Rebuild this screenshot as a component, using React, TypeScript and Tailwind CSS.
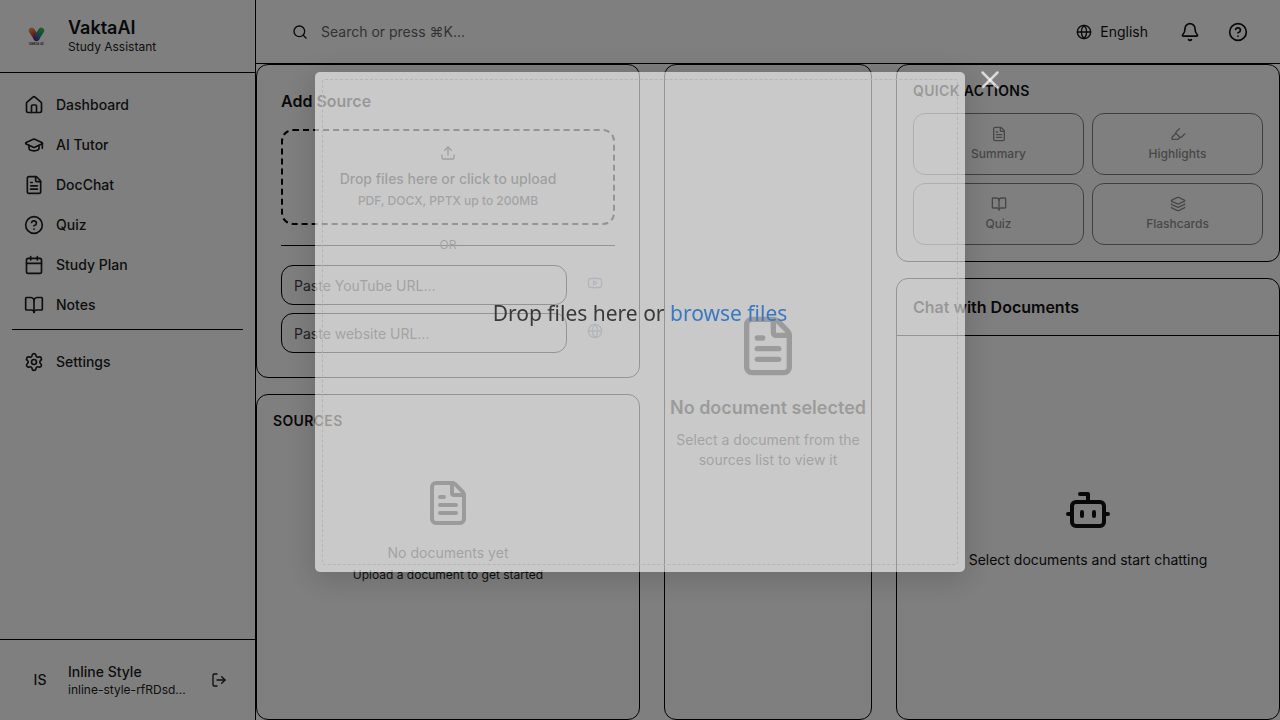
import {
  BookOpen,
  Bell,
  Bot,
  Calendar,
  CircleHelp,
  FileText,
  Globe,
  GraduationCap,
  Highlighter,
  House,
  Layers,
  LogOut,
  Search,
  Settings,
  Upload,
  X,
  Youtube,
} from "lucide-react";

const NAV_ITEMS = [
  { label: "Dashboard", icon: House },
  { label: "AI Tutor", icon: GraduationCap },
  { label: "DocChat", icon: FileText },
  { label: "Quiz", icon: CircleHelp },
  { label: "Study Plan", icon: Calendar },
  { label: "Notes", icon: BookOpen },
];

const QUICK_ACTIONS = [
  { label: "Summary", icon: FileText },
  { label: "Highlights", icon: Highlighter },
  { label: "Quiz", icon: BookOpen },
  { label: "Flashcards", icon: Layers },
];

function Logo() {
  return (
    <div className="flex w-6 flex-col items-center">
      <svg width="17" height="14" viewBox="0 0 17 14">
        <defs>
          <linearGradient id="leftWing" x1="3" y1="2" x2="9" y2="13" gradientUnits="userSpaceOnUse">
            <stop offset="0" stopColor="#f0913a" />
            <stop offset="0.55" stopColor="#c9344f" />
            <stop offset="1" stopColor="#5b2a9d" />
          </linearGradient>
          <linearGradient id="rightWing" x1="14" y1="2" x2="8" y2="13" gradientUnits="userSpaceOnUse">
            <stop offset="0" stopColor="#3fb950" />
            <stop offset="0.55" stopColor="#1f8f8a" />
            <stop offset="1" stopColor="#5b2a9d" />
          </linearGradient>
        </defs>
        <path d="M3.8 3.6 8.5 11" stroke="url(#leftWing)" strokeWidth="6" strokeLinecap="round" fill="none" />
        <path d="M13.2 3.6 8.5 11" stroke="url(#rightWing)" strokeWidth="6" strokeLinecap="round" fill="none" />
      </svg>
      <span className="text-[4px] leading-[5px] font-medium text-[#222]">Vakta ai</span>
    </div>
  );
}

function Sidebar() {
  return (
    <aside className="flex h-full w-64 shrink-0 flex-col border-r border-black bg-white">
      <div className="flex h-[73px] items-center gap-5 border-b border-black px-6">
        <Logo />
        <div className="pb-px">
          <div className="text-lg leading-6 font-semibold text-[#111]">VaktaAI</div>
          <div className="-mt-px text-xs leading-4 text-[#222]">Study Assistant</div>
        </div>
      </div>

      <nav className="flex-1 px-3 pt-3">
        {NAV_ITEMS.map((item) => (
          <div key={item.label} className="flex h-10 items-center gap-3 px-3 text-sm font-medium text-[#1c1c1c]">
            <item.icon size={20} />
            {item.label}
          </div>
        ))}
        <div className="mt-1 border-t border-black pt-3">
          <div className="flex h-10 items-center gap-3 px-3 text-sm font-medium text-[#1c1c1c]">
            <Settings size={20} />
            Settings
          </div>
        </div>
      </nav>

      <div className="flex h-[81px] items-center border-t border-black px-6">
        <div className="w-8 text-center text-sm font-medium text-[#1c1c1c]">IS</div>
        <div className="ml-3 min-w-0 flex-1">
          <div className="text-sm leading-5 font-medium text-[#1c1c1c]">Inline Style</div>
          <div className="text-xs leading-4 text-[#222]">inline-style-rfRDsd...</div>
        </div>
        <LogOut size={16} className="mr-1 text-[#1c1c1c]" />
      </div>
    </aside>
  );
}

function Header() {
  return (
    <header className="flex h-16 shrink-0 items-center justify-between border-b border-black pr-8 pl-9">
      <div className="flex items-center gap-[13px] text-sm text-[#666]">
        <Search size={16} className="text-[#111]" />
        Search or press ⌘K...
      </div>
      <div className="flex items-center text-[#111]">
        <Globe size={16} />
        <span className="mr-8 ml-2 text-sm">English</span>
        <Bell size={20} className="mr-7" />
        <CircleHelp size={20} />
      </div>
    </header>
  );
}

function LeftColumn() {
  return (
    <div className="flex min-h-0 flex-col gap-4">
      <section className="rounded-xl border border-black p-6">
        <h2 className="text-base font-semibold text-[#111]">Add Source</h2>
        <div className="mt-4 flex h-24 flex-col items-center justify-center rounded-xl border-2 border-dashed border-black">
          <Upload size={16} className="text-[#333]" />
          <div className="mt-2 text-sm font-medium text-[#333]">Drop files here or click to upload</div>
          <div className="mt-1 text-xs font-medium text-[#444]">PDF, DOCX, PPTX up to 200MB</div>
        </div>
        <div className="relative mt-5 flex justify-center border-t border-black">
          <span className="absolute -top-[9px] text-xs leading-4 text-[#444]">OR</span>
        </div>
        <div className="mt-[19px] flex flex-col gap-2">
          <div className="flex gap-5">
            <div className="flex h-10 w-[286px] items-center rounded-xl border border-black px-3 pt-px text-sm text-[#444]">
              Paste YouTube URL...
            </div>
            <Youtube size={16} className="mt-[10px] text-gray-400" />
          </div>
          <div className="flex gap-5">
            <div className="flex h-10 w-[286px] items-center rounded-xl border border-black px-3 pt-px text-sm text-[#444]">
              Paste website URL...
            </div>
            <Globe size={16} className="mt-[10px] text-gray-400" />
          </div>
        </div>
      </section>

      <section className="flex min-h-0 flex-1 flex-col rounded-xl border border-black p-4">
        <h3 className="text-sm font-semibold tracking-wide text-[#111]">SOURCES</h3>
        <div className="flex flex-1 flex-col items-center pt-12">
          <FileText size={48} className="text-[#222]" />
          <div className="mt-4 text-sm text-[#444]">No documents yet</div>
          <div className="mt-1 text-xs text-[#1c1c1c]">Upload a document to get started</div>
        </div>
      </section>
    </div>
  );
}

function ViewerColumn() {
  return (
    <section className="flex flex-col items-center rounded-xl border border-black px-1 pt-[249px] text-center">
      <FileText size={64} className="text-[#222]" />
      <h3 className="mt-4 text-lg font-semibold text-[#222]">No document selected</h3>
      <p className="mt-2 text-sm text-[#444]">Select a document from the sources list to view it</p>
    </section>
  );
}

function RightColumn() {
  return (
    <div className="flex min-h-0 flex-col gap-4">
      <section className="rounded-xl border border-black p-4">
        <h3 className="text-sm font-semibold tracking-wide text-[#111]">QUICK ACTIONS</h3>
        <div className="mt-3 grid grid-cols-2 gap-2">
          {QUICK_ACTIONS.map((action) => (
            <div
              key={action.label}
              className="flex h-[62px] flex-col items-center justify-center gap-1 rounded-xl border border-[#808080] text-xs font-medium text-[#909090]"
            >
              <action.icon size={16} />
              {action.label}
            </div>
          ))}
        </div>
      </section>

      <section className="flex min-h-0 flex-1 flex-col rounded-xl border border-black">
        <div className="flex h-[57px] shrink-0 items-center border-b border-black px-4 pb-px text-base font-semibold text-[#111]">
          Chat with Documents
        </div>
        <div className="flex flex-1 flex-col items-center pt-[150px] text-sm text-[#111]">
          <Bot size={48} />
          <div className="mt-4">Select documents and start chatting</div>
        </div>
      </section>
    </div>
  );
}

function UploadModal() {
  return (
    <div className="fixed inset-0 bg-black/50">
      <div className="absolute top-[72px] left-[315px] flex h-[500px] w-[650px] items-center justify-center rounded-[5px] bg-white/[0.58] shadow-[0_5px_30px_4px_rgba(0,0,0,0.15)]">
        <div className="absolute inset-[7px] rounded-[3px] border border-dashed border-[#b5b5b5]" />
        <div className="relative -mt-[18px] font-['Noto_Sans',sans-serif] text-[21px] leading-[30px] text-[#3a3a3a]">
          Drop files here or <span className="text-[#3a78c2]">browse files</span>
        </div>
      </div>
      <X size={30} className="absolute top-[65px] left-[975px] text-white/70" />
    </div>
  );
}

export default function App() {
  return (
    <div className="relative flex h-screen overflow-hidden bg-white font-['Inter',sans-serif]">
      <Sidebar />
      <div className="flex min-w-0 flex-1 flex-col">
        <Header />
        <main className="grid min-h-0 flex-1 grid-cols-[384px_208px_384px] gap-6">
          <LeftColumn />
          <ViewerColumn />
          <RightColumn />
        </main>
      </div>
      <UploadModal />
    </div>
  );
}
